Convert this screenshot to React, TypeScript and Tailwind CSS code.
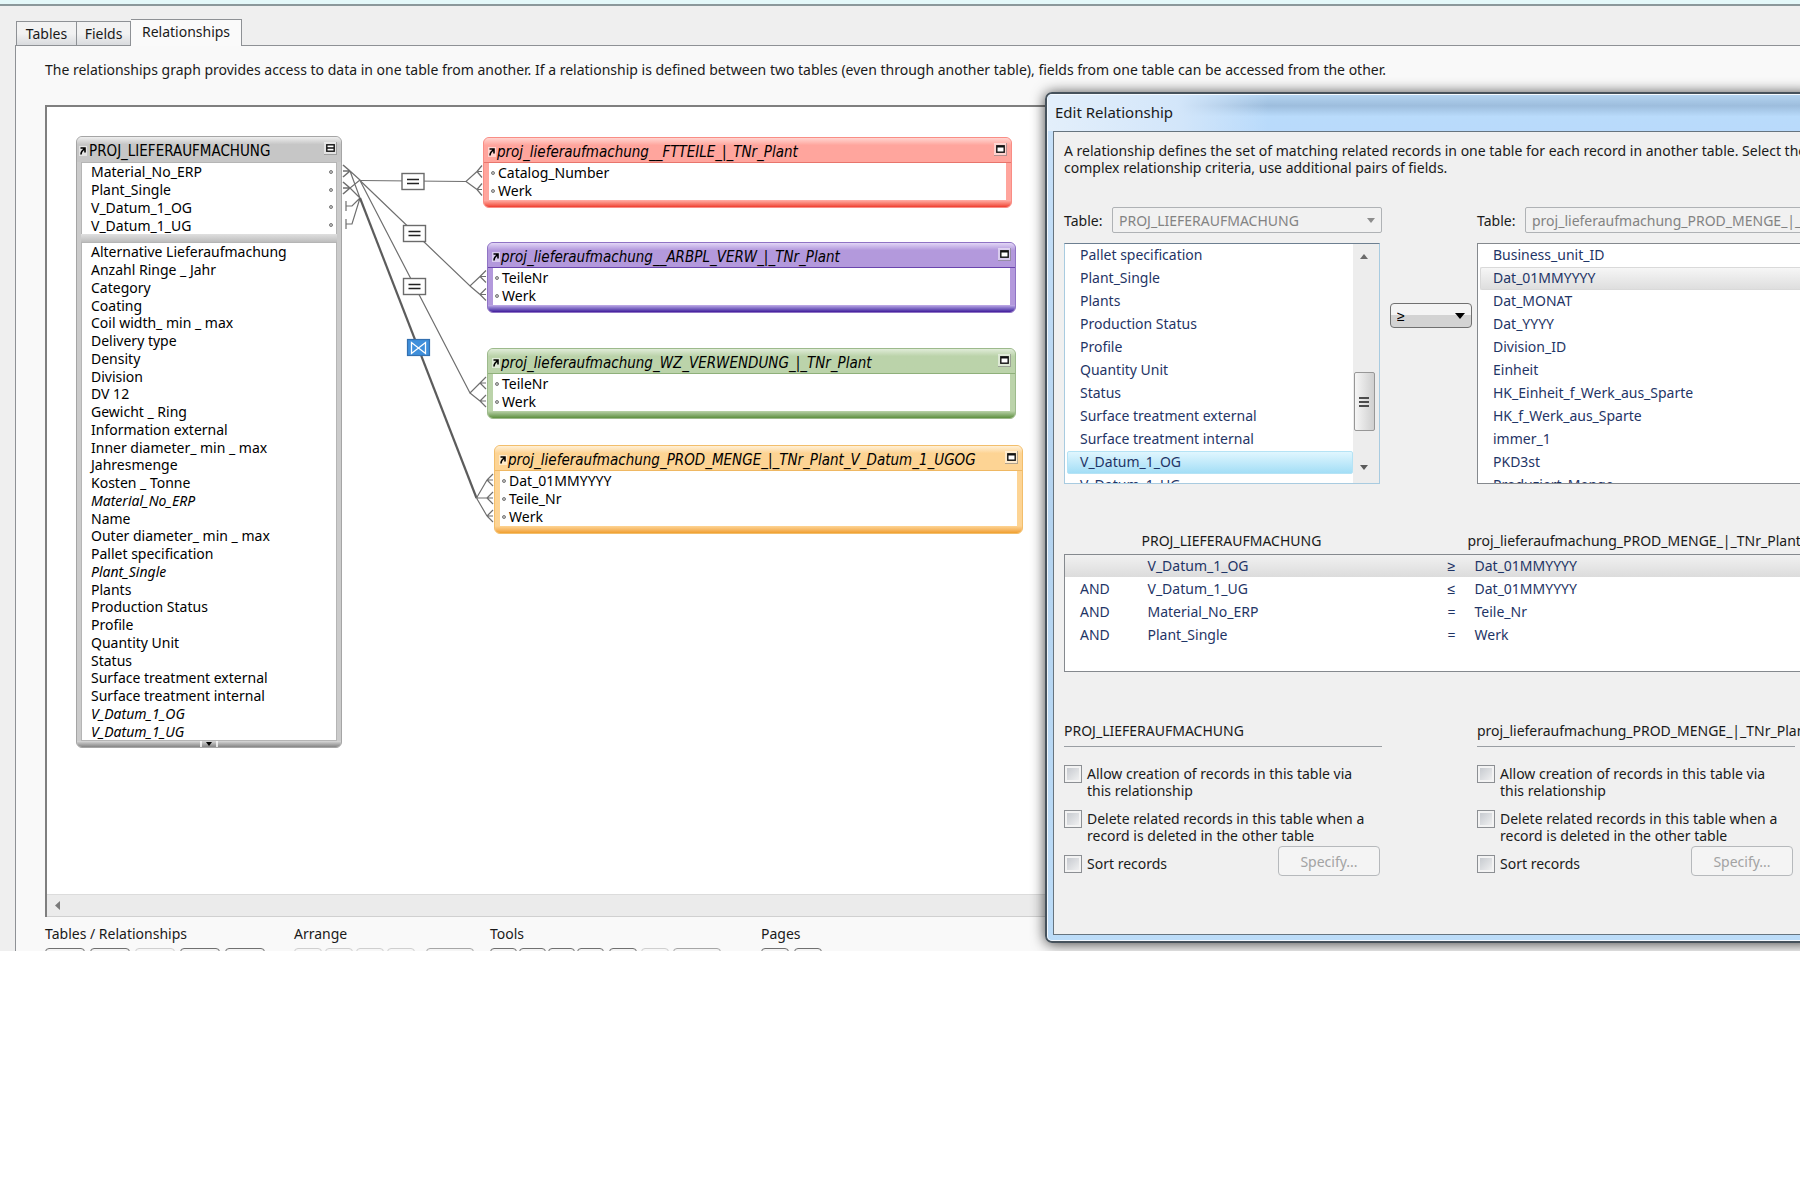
import { clsx } from "clsx";

const LEFT_TABLE = "PROJ_LIEFERAUFMACHUNG";
const RIGHT_TABLE = "proj_lieferaufmachung_PROD_MENGE_|_TNr_Plant_V_Datum_1_UGOG";

const keyFields = ["Material_No_ERP", "Plant_Single", "V_Datum_1_OG", "V_Datum_1_UG"];

const allFields = [
  "Alternative Lieferaufmachung",
  "Anzahl Ringe _ Jahr",
  "Category",
  "Coating",
  "Coil width_ min _ max",
  "Delivery type",
  "Density",
  "Division",
  "DV 12",
  "Gewicht _ Ring",
  "Information external",
  "Inner diameter_ min _ max",
  "Jahresmenge",
  "Kosten _ Tonne",
  "Material_No_ERP",
  "Name",
  "Outer diameter_ min _ max",
  "Pallet specification",
  "Plant_Single",
  "Plants",
  "Production Status",
  "Profile",
  "Quantity Unit",
  "Status",
  "Surface treatment external",
  "Surface treatment internal",
  "V_Datum_1_OG",
  "V_Datum_1_UG",
];

const relatedTables = [
  {
    title: "proj_lieferaufmachung__FTTEILE_|_TNr_Plant",
    fields: ["Catalog_Number", "Werk"],
    place: "left-[436px] top-[30px]",
    frame: "border-[#f98d85] bg-[#ffa59d]",
    head: "border-[#e8756c] from-[#ffd5d1] to-[#ffa59d]",
    foot: "from-[#ffb0a9] to-[#ee3b2f]",
  },
  {
    title: "proj_lieferaufmachung__ARBPL_VERW_|_TNr_Plant",
    fields: ["TeileNr", "Werk"],
    place: "left-[440px] top-[135px]",
    frame: "border-[#8f74c4] bg-[#b399dc]",
    head: "border-[#6a45ad] from-[#e2d6f6] to-[#b399dc]",
    foot: "from-[#c3aee8] to-[#43179b]",
  },
  {
    title: "proj_lieferaufmachung_WZ_VERWENDUNG_|_TNr_Plant",
    fields: ["TeileNr", "Werk"],
    place: "left-[440px] top-[241px]",
    frame: "border-[#9dba8c] bg-[#bbd3aa]",
    head: "border-[#8fb07a] from-[#e0ecd8] to-[#bbd3aa]",
    foot: "from-[#bbd3aa] to-[#5f9040]",
  },
  {
    title: "proj_lieferaufmachung_PROD_MENGE_|_TNr_Plant_V_Datum_1_UGOG",
    fields: ["Dat_01MMYYYY", "Teile_Nr", "Werk"],
    place: "left-[447px] top-[338px]",
    frame: "border-[#f2be6c] bg-[#fdd494]",
    head: "border-[#efb863] from-[#fff0d6] to-[#fdd494]",
    foot: "from-[#fdd494] to-[#f0a02c]",
  },
];

const leftFields = [
  "Pallet specification",
  "Plant_Single",
  "Plants",
  "Production Status",
  "Profile",
  "Quantity Unit",
  "Status",
  "Surface treatment external",
  "Surface treatment internal",
  "V_Datum_1_OG",
  "V_Datum_1_UG",
];

const rightFields = [
  "Business_unit_ID",
  "Dat_01MMYYYY",
  "Dat_MONAT",
  "Dat_YYYY",
  "Division_ID",
  "Einheit",
  "HK_Einheit_f_Werk_aus_Sparte",
  "HK_f_Werk_aus_Sparte",
  "immer_1",
  "PKD3st",
  "Produziert_Menge",
];

const criteria = [
  ["", "V_Datum_1_OG", "≥", "Dat_01MMYYYY"],
  ["AND", "V_Datum_1_UG", "≤", "Dat_01MMYYYY"],
  ["AND", "Material_No_ERP", "=", "Teile_Nr"],
  ["AND", "Plant_Single", "=", "Werk"],
];

const toolGroups = [
  {
    label: "Tables / Relationships",
    width: "w-[249px]",
    gap: "gap-[5px]",
    buttons: ["w-10", "w-10", "w-10 opacity-30", "w-10", "w-10"],
  },
  {
    label: "Arrange",
    width: "w-[196px]",
    gap: "gap-[3px]",
    buttons: ["w-7 opacity-30", "w-7 opacity-30", "w-7 opacity-30", "w-7 opacity-30", "w-12 ml-2 opacity-60"],
  },
  {
    label: "Tools",
    width: "w-[271px]",
    gap: "gap-[2px]",
    buttons: ["w-[27px]", "w-[27px]", "w-[27px]", "w-[27px]", "w-7 ml-[3px]", "w-7 ml-[2px] opacity-30", "w-12 ml-[2px] opacity-60"],
  },
  { label: "Pages", width: "w-20", gap: "gap-[5px]", buttons: ["w-7", "w-7"] },
];

const NodeArrow = () => (
  <svg viewBox="0 0 8 10" className="w-2 h-[10px] shrink-0 bg-white/50" fill="none" stroke="#000" strokeWidth="1.6" aria-hidden="true">
    <path d="M1.500 2H6V6.500M5.800 2.200L3 5.200C2.200 6.200 2 7.200 2 8.500" />
  </svg>
);

const NodeToggle = ({ full }: { full?: boolean }) => (
  <button
    type="button"
    aria-label="Toggle fields"
    className="flex items-center justify-center w-[13px] h-[13px] shrink-0 bg-white/50 border-r border-b border-black/30"
  >
    <svg viewBox="0 0 9 8" className="w-[9px] h-2" fill="#fff" stroke="#111" strokeWidth="1.4" aria-hidden="true">
      <rect x="0.8" y="0.8" width="7.4" height="6.4" />
      <path d={full ? "M1 4H8" : "M1 1.8H8"} />
    </svg>
  </button>
);

const Dot = () => <span className="w-1 h-1 shrink-0 rounded-full border border-[#7a7a7a] bg-[#c4c4c4]" />;

const MainTable = () => (
  <section className="absolute left-[29px] top-[29px] w-[266px] flex flex-col rounded-md border border-[#a5a5a5] bg-[#cbcbcb] px-1 overflow-hidden">
    <header className="flex items-start justify-between h-[25px] -mx-1 pl-[2px] pr-1 pt-[5px] bg-linear-to-b from-[#efefef] to-[#c6c6c6] to-30%">
      <h2 className="flex items-center gap-[2px] leading-[18px] text-[15px] font-['DejaVu_Sans_Condensed','DejaVu_Sans',sans-serif]">
        <NodeArrow />
        {LEFT_TABLE}
      </h2>
      <NodeToggle full />
    </header>
    <ul className="grid auto-rows-fr h-[72px] pl-[9px] pr-[3px] bg-white border border-b-0 border-[#b5b5b5]">
      {keyFields.map((f) => (
        <li key={f} className="flex items-center justify-between">
          {f}
          <Dot />
        </li>
      ))}
    </ul>
    <div className="h-2 bg-linear-to-b from-[#e0e0e0] to-[#bdbdbd]" />
    <ul className="grid auto-rows-fr h-[499px] pl-[9px] bg-white border border-[#b5b5b5]">
      {allFields.map((f) => (
        <li key={f} className={clsx("flex items-center", keyFields.includes(f) && "italic")}>
          {f}
        </li>
      ))}
    </ul>
    <div className="flex justify-center h-[6px] -mx-1 bg-linear-to-b from-[#d8d8d8] to-[#858585]">
      <svg viewBox="0 0 18 6" className="w-[18px] h-[6px]" aria-hidden="true">
        <path d="M1 0V6M17 0V6" stroke="#fff" strokeWidth="1.5" />
        <path d="M6 1H12L9 5Z" fill="#000" />
      </svg>
    </div>
  </section>
);

const RelatedTable = ({ title, fields, place, frame, head, foot }: (typeof relatedTables)[number]) => (
  <section className={clsx("absolute w-[529px] flex flex-col rounded-md border overflow-hidden", place, frame)}>
    <header className={clsx("flex items-start justify-between h-[25px] px-1 pt-[5px] border-b bg-linear-to-b to-30%", head)}>
      <h2 className="flex items-center gap-px leading-[18px] text-[15px] italic font-['DejaVu_Sans_Condensed','DejaVu_Sans',sans-serif]">
        <NodeArrow />
        {title}
      </h2>
      <NodeToggle />
    </header>
    <ul className="mx-[5px] pl-[2px] pt-px bg-white">
      {fields.map((f) => (
        <li key={f} className="flex items-center gap-[3px] leading-[18px]">
          <Dot />
          {f}
        </li>
      ))}
    </ul>
    <div className={clsx("h-[7px] bg-linear-to-b", foot)} />
  </section>
);

// one crow's foot: apex, then three prongs ending on the table's edge
const crow = (x: number, y: number, edge: number) =>
  `M${x} ${y}L${edge} ${y - 6}M${x} ${y}H${edge}M${x} ${y}L${edge} ${y + 6}`;

const OperatorBox = ({ x, y }: { x: number; y: number }) => (
  <g>
    <rect x={x} y={y} width="22" height="16" fill="#fff" stroke="#6b6b6b" strokeWidth="1.4" />
    <path d={`M${x + 5} ${y + 6}h12M${x + 5} ${y + 10}h12`} stroke="#222" strokeWidth="1.6" />
  </g>
);

const Connectors = () => (
  <svg viewBox="47 107 460 440" className="absolute left-0 top-0 w-[460px] h-[440px]" fill="none" stroke="#6f6f6f" strokeWidth="1.2" aria-hidden="true">
    <path d={crow(350, 171, 343)} strokeWidth="1.6" />
    <path d={crow(350, 188, 343)} strokeWidth="1.6" />
    <path d="M350 171L360 180L350 188L360 198M350 171L360 198L352 206H346M346 201V211M360 198L352 224H346M346 219V229" />
    <path d="M360 180.5L466 181.5L477 171.5M466 181.5L477 189.5" />
    <path d={crow(477, 171.5, 482) + crow(477, 189.5, 482)} />
    <path d="M360 180.5L470 286L480 276.5M470 286L480 294.5" />
    <path d={crow(480, 276.5, 486) + crow(480, 294.5, 486)} />
    <path d="M360 180.5L470 393L480 383M470 393L480 401" />
    <path d={crow(480, 383, 486) + crow(480, 401, 486)} />
    <path d="M360 198L476.500 498" stroke="#5c5c5c" strokeWidth="2.2" />
    <path d="M476.500 498L487 480M476.500 498H487M476.500 498L487 516" />
    <path d={crow(487, 480, 493) + crow(487, 498, 493) + crow(487, 516, 493)} />
    <OperatorBox x={402} y={173.5} />
    <OperatorBox x={403.5} y={225.5} />
    <OperatorBox x={403.5} y={278.5} />
    <rect x="407.5" y="339.5" width="22" height="16" fill="#3f8fdb" stroke="#3470b0" />
    <path d="M411.500 342.500V353.500L425.500 342.500V353.500Z" stroke="#fff" strokeWidth="1.3" />
  </svg>
);

const FieldList = ({ label, items, selected, className, children }: {
  label: string;
  items: string[];
  selected: string;
  className: string;
  children?: React.ReactNode;
}) => (
  <div className={clsx("flex h-[241px] bg-white border overflow-hidden", className)}>
    <ul role="listbox" aria-label={label} className="flex-1 text-[#1f3566]">
      {items.map((item) => (
        <li
          key={item}
          role="option"
          aria-selected={item === selected}
          className={clsx(
            "h-[23px] ml-[2px] whitespace-nowrap",
            item !== selected && "leading-[21px] pl-[13px]",
            item === selected && "rounded-xs border leading-[19px] pl-3 bg-linear-to-b",
            item === selected && children && "border-[#b5e3f5] from-[#e0f6fe] to-[#a3def6]",
            item === selected && !children && "border-r-0 border-[#d9d9d9] from-[#f6f6f6] to-[#dedede]",
          )}
        >
          {item}
        </li>
      ))}
    </ul>
    {children}
  </div>
);

const ListScrollbar = () => (
  <div className="flex flex-col items-center w-[26px] pr-1 py-[10px] bg-[#ededed]">
    <svg viewBox="0 0 8 5" className="w-2 h-[5px]" fill="#6b6b6b" aria-hidden="true">
      <path d="M4 0L8 5H0Z" />
    </svg>
    <div className="flex flex-col items-center justify-center gap-[2px] w-[21px] h-[59px] mt-[113px] rounded-xs border border-[#979797] bg-linear-to-r from-[#f6f6f6] to-[#cfcfcf]">
      <i className="w-[10px] h-[2px] bg-[#4d4d4d]" />
      <i className="w-[10px] h-[2px] bg-[#4d4d4d]" />
      <i className="w-[10px] h-[2px] bg-[#4d4d4d]" />
    </div>
    <svg viewBox="0 0 8 5" className="w-2 h-[5px] mt-[34px]" fill="#5b5b5b" aria-hidden="true">
      <path d="M0 0H8L4 5Z" />
    </svg>
  </div>
);

const Tick = ({ id }: { id: string }) => (
  <input
    id={id}
    type="checkbox"
    className="appearance-none w-[18px] h-[18px] shrink-0 border border-[#8c8f93] bg-linear-to-br from-[#c0c4ca] to-[#f6f6f6] shadow-[inset_0_0_0_2px_#f3f3f3]"
  />
);

const RecordOptions = ({ id, title }: { id: string; title: string }) => (
  <fieldset className="w-[318px] min-w-0 shrink-0">
    <legend className="w-full h-6 whitespace-nowrap leading-[18px]">{title}</legend>
    <div className="border-t border-[#9a9ea3] pt-[18px] flex flex-col">
      {[
        ["create", "Allow creation of records in this table via this relationship"],
        ["delete", "Delete related records in this table when a record is deleted in the other table"],
      ].map(([key, text]) => (
        <div key={key} className="flex items-start gap-[5px] h-[45px]">
          <Tick id={`${id}-${key}`} />
          <label htmlFor={`${id}-${key}`} className="w-[286px] leading-[17px]">
            {text}
          </label>
        </div>
      ))}
      <div className="flex items-start h-8 gap-[5px]">
        <Tick id={`${id}-sort`} />
        <label htmlFor={`${id}-sort`} className="leading-[17px]">
          Sort records
        </label>
        <button
          type="button"
          disabled
          className="ml-auto -mt-[9px] mr-[2px] w-[102px] h-[30px] rounded-[4px] border border-[#b6b9bc] bg-[#f4f4f4] text-[#a3a3a3]"
        >
          Specify...
        </button>
      </div>
    </div>
  </fieldset>
);

const TableSelect = ({ id, value, className }: { id: string; value: string; className: string }) => (
  <div className="flex items-center">
    <label htmlFor={id} className="w-12 shrink-0">
      Table:
    </label>
    <div className={clsx("relative h-[26px] shrink-0", className)}>
      <select
        id={id}
        disabled
        defaultValue={value}
        className="appearance-none w-full h-full pl-[6px] rounded-xs border border-[#afb2b5] bg-[#f1f1f1] text-[#838383] opacity-100"
      >
        <option>{value}</option>
      </select>
      <svg viewBox="0 0 8 5" className="absolute right-[7px] top-[11px] w-2 h-[5px]" fill="#8d8d8d" aria-hidden="true">
        <path d="M0 0H8L4 5Z" />
      </svg>
    </div>
  </div>
);

const EditRelationship = () => (
  <div
    role="dialog"
    aria-labelledby="dialog-title"
    className="absolute left-[1045px] -right-4 top-[92px] z-10 rounded-[7px] border-2 border-[#46525c] bg-linear-to-b from-[#c9e2fa] via-[#b4d3ef] to-[#bcdcf8] shadow-[0_1px_14px_rgba(0,0,0,0.75)]"
  >
    <div className="rounded-[5px] border border-r-0 border-white/80 pl-[5px] pb-[5px]">
      <h1
        id="dialog-title"
        className="h-9 leading-[34px] pl-[2px] -ml-[5px] rounded-t-[5px] text-[15px] indent-[5px] bg-[linear-gradient(90deg,#e3effb_0,#d3e6fa_130px,transparent_220px),linear-gradient(180deg,#b3d3f0_0,#9dbddd_30%,#b9dbfb_60%,#b9dafb_100%)]"
      >
        Edit Relationship
      </h1>
      <div className="border border-[#66747f] bg-[#f0f0f0] overflow-hidden pl-[10px] pt-[10px] h-[804px] flex flex-col">
        <p className="leading-[17px] whitespace-nowrap">
          A relationship defines the set of matching related records in one table for each record in another table. Select the
          <br />
          complex relationship criteria, use additional pairs of fields.
        </p>

        <div className="flex mt-[31px]">
          <div className="w-[318px] shrink-0 flex flex-col gap-[10px]">
            <TableSelect id="left-table" value={LEFT_TABLE} className="w-[270px]" />
            <FieldList label={LEFT_TABLE} items={leftFields} selected="V_Datum_1_OG" className="w-[316px] border-[#a8cbe0] border-t-[#6d7f91]">
              <ListScrollbar />
            </FieldList>
          </div>
          <div className="relative w-[82px] h-[25px] mt-24 ml-2 mr-[5px] shrink-0">
            <select
              aria-label="Operator"
              defaultValue="≥"
              className="appearance-none w-full h-full pl-[6px] rounded-[4px] border border-[#707070] bg-linear-to-b from-[#f4f4f4] from-50% to-[#d3d3d3] to-50% text-black"
            >
              <option>≥</option>
              <option>≤</option>
              <option>=</option>
            </select>
            <svg viewBox="0 0 10 6" className="absolute right-[7px] top-[10px] w-[10px] h-[6px]" aria-hidden="true">
              <path d="M0 0H10L5 6Z" fill="#000" />
            </svg>
          </div>
          <div className="flex-1 min-w-0 flex flex-col gap-[10px]">
            <TableSelect id="right-table" value={RIGHT_TABLE} className="w-[316px]" />
            <FieldList label={RIGHT_TABLE} items={rightFields} selected="Dat_01MMYYYY" className="border-r-0 border-[#85898e]" />
          </div>
        </div>

        <table className="mt-11 table-fixed w-full border-collapse text-left">
          <thead>
            <tr className="h-[26px] align-middle">
              <th className="w-[77px]" />
              <th className="w-[290px] font-normal">{LEFT_TABLE}</th>
              <th className="w-9" />
              <th className="font-normal whitespace-nowrap">{RIGHT_TABLE}</th>
            </tr>
          </thead>
          <tbody className="border border-r-0 border-b-0 border-[#85898e] bg-white text-[#1f3566]">
            {criteria.map(([join, left, op, right], i) => (
              <tr key={i} className={clsx("h-[23px]", i === 0 && "bg-linear-to-b from-[#f2f2f2] to-[#dcdcdc]")}>
                <td className="pl-[15px]">{join}</td>
                <td className="pl-[6px]">{left}</td>
                <td className="pl-4">{op}</td>
                <td className="pl-[7px]">{right}</td>
              </tr>
            ))}
          </tbody>
        </table>
        <div className="h-[26px] bg-white border border-t-0 border-r-0 border-[#85898e]" />

        <div className="flex gap-[95px] mt-[50px]">
          <RecordOptions id="left" title={LEFT_TABLE} />
          <RecordOptions id="right" title={RIGHT_TABLE} />
        </div>
      </div>
    </div>
  </div>
);

export default function App() {
  return (
    <div className="bg-white text-[14px] text-[#1a1a1a] font-['Noto_Sans',sans-serif]">
      <main className="relative overflow-hidden bg-[#efefef]">
        <div className="h-[6px] border-b-2 border-[#8b989b] bg-[#e4f8f9]" />

        <nav role="tablist" className="relative flex items-end h-10 ml-4 -mb-px z-1">
          <button type="button" role="tab" className="w-[61px] h-6 leading-5 mb-px border border-b-0 border-[#8e9195] bg-linear-to-b from-[#f2f2f2] from-50% to-[#d9dbde]">
            Tables
          </button>
          <button type="button" role="tab" className="w-[54px] h-6 mb-px leading-5 border border-b-0 border-l-0 border-[#8e9195] bg-linear-to-b from-[#f2f2f2] from-50% to-[#d9dbde]">
            Fields
          </button>
          <button type="button" role="tab" aria-selected="true" className="w-[111px] h-[27px] pb-[3px] leading-5 border border-l-0 border-b-0 border-[#8e9195] bg-[#fafafa]">
            Relationships
          </button>
        </nav>

        <div className="ml-[15px] pl-[29px] pt-[15px] border-l border-t border-[#8e9195] bg-[#f9f9f9]">
          <p className="leading-[18px] whitespace-nowrap">
            The relationships graph provides access to data in one table from another. If a relationship is defined between two
            tables (even through another table), fields from one table can be accessed from the other.
          </p>

          <div className="mt-[26px] border-l-2 border-t-2 border-[#7f7f7f]">
            <div className="relative h-[787px] bg-white text-black">
              <Connectors />
              <MainTable />
              {relatedTables.map((t) => (
                <RelatedTable key={t.title} {...t} />
              ))}
            </div>
            <div className="flex items-center h-[23px] pl-2 border-t border-b border-t-[#dcdcdc] border-b-[#d0d0d0] bg-[#ebebeb]">
              <svg viewBox="0 0 5 9" className="w-[5px] h-[9px]" fill="#7a7a7a" aria-hidden="true">
                <path d="M5 0V9L0 4.500Z" />
              </svg>
            </div>
          </div>

          <div className="flex mt-2">
            {toolGroups.map((g) => (
              <div key={g.label} className={g.width}>
                <h3 className="leading-[18px]">{g.label}</h3>
                <div className={clsx("flex mt-[5px] h-[3px] overflow-hidden", g.gap)}>
                  {g.buttons.map((b, i) => (
                    <button key={i} type="button" aria-label={`${g.label} ${i + 1}`} className={clsx("h-7 shrink-0 rounded-[4px] border border-[#707070] bg-[#f4f4f4]", b)} />
                  ))}
                </div>
              </div>
            ))}
          </div>
        </div>
        <EditRelationship />
      </main>
    </div>
  );
}
